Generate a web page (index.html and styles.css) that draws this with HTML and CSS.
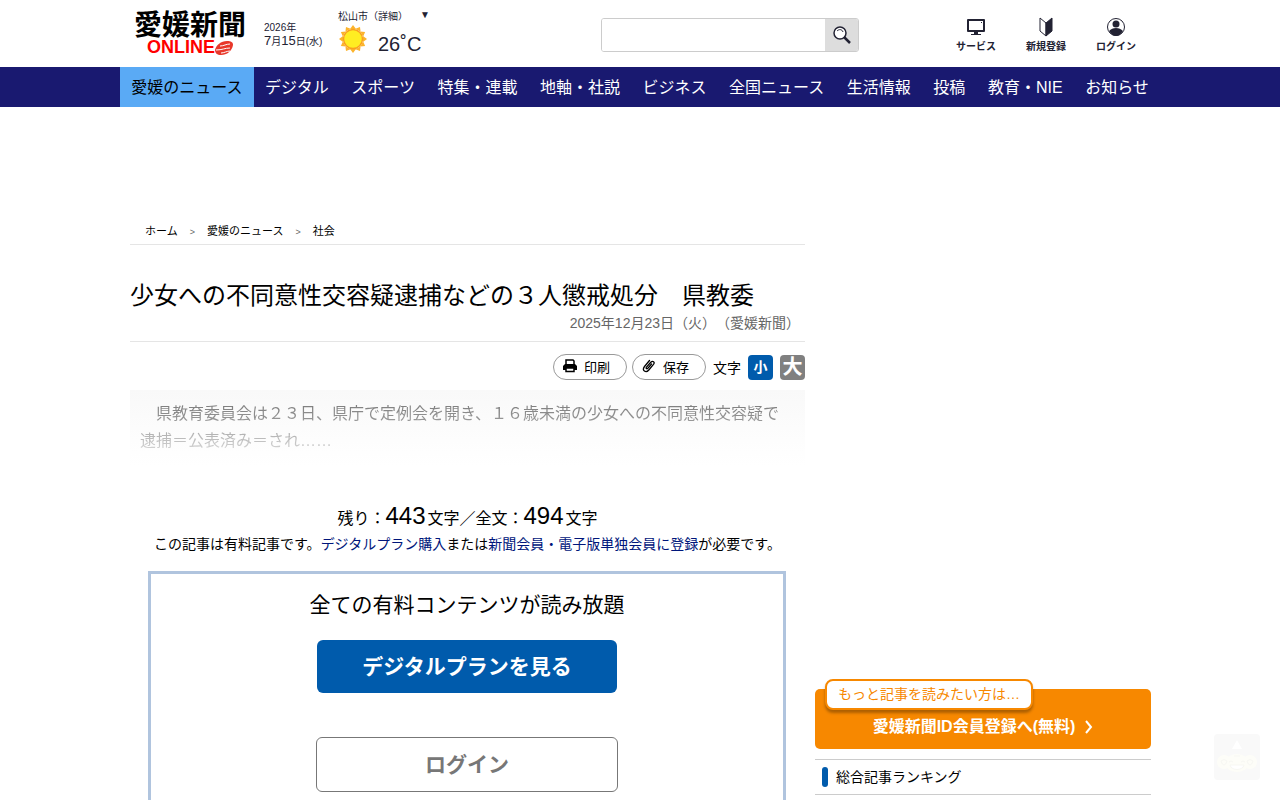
FILE: index.html
```html
<!DOCTYPE html>
<html lang="ja">
<head>
  <meta charset="UTF-8">
  <meta name="viewport" content="width=device-width, initial-scale=1.0">
  <title>少女への不同意性交容疑逮捕などの３人懲戒処分　県教委</title>

  <link rel="stylesheet" href="styles.css">
</head>
<body>
  <header class="header">
    <a class="logo" href="#">
      <span class="logo-name">愛媛新聞</span>
      <span class="logo-online">ONLINE
        <svg width="18" height="14" viewBox="0 0 18 14">
          <path d="M0 9C1 4 6 0 12 0c4 0 6 1 6 4-1 6-6 10-12 10-4 0-6-2-6-5z" fill="#e8382a"/>
          <path d="M5 5c4 0 6-2 10-2M1 9c6 0 9-2 14-2M6 12c3 0 6-2 9-2" fill="none" stroke="#fff" stroke-width="1"/>
        </svg>
      </span>
    </a>

    <p class="date">2026年<br><span>7</span>月<span>15</span>日(水)</p>

    <div class="weather">
      <a class="weather-city" href="#">松山市（詳細）<span>▼</span></a>
      <div class="weather-now">
        <svg width="30" height="30" viewBox="0 0 30 30">
          <g fill="#fcb42c">
            <path id="ray" d="M15 1l3 4h-6z"/>
            <use href="#ray" transform="rotate(30 15 15)"/>
            <use href="#ray" transform="rotate(60 15 15)"/>
            <use href="#ray" transform="rotate(90 15 15)"/>
            <use href="#ray" transform="rotate(120 15 15)"/>
            <use href="#ray" transform="rotate(150 15 15)"/>
            <use href="#ray" transform="rotate(180 15 15)"/>
            <use href="#ray" transform="rotate(210 15 15)"/>
            <use href="#ray" transform="rotate(240 15 15)"/>
            <use href="#ray" transform="rotate(270 15 15)"/>
            <use href="#ray" transform="rotate(300 15 15)"/>
            <use href="#ray" transform="rotate(330 15 15)"/>
          </g>
          <circle cx="15" cy="15" r="9.500" fill="#ffed22" stroke="#f9a01e" stroke-width="1.500"/>
        </svg>
        <span>26˚C</span>
      </div>
    </div>

    <form class="search">
      <input type="text" aria-label="検索">
      <button type="button" aria-label="検索する">
        <svg width="18" height="18" viewBox="0 0 18 18" fill="none" stroke="#223">
          <circle cx="7" cy="7" r="6" fill="#fff" stroke-width="1.500"/>
          <path d="M4 5c2-2 5-2 6 1" stroke-width="1"/>
          <path d="M11 11l6 6" stroke-width="2.500"/>
        </svg>
      </button>
    </form>

    <nav class="menu">
      <a href="#">
        <svg width="20" height="20" viewBox="0 0 20 20">
          <path d="M2 3h16v11H2z" fill="none" stroke="#223" stroke-width="2" stroke-linejoin="round"/>
          <path d="M8 15h4v2h3v1H5v-1h3zM15 5h1v1h-1z" fill="#223"/>
        </svg>
        サービス
      </a>
      <a href="#">
        <svg width="20" height="20" viewBox="0 0 20 20">
          <path d="M4 1l6 5v13l-6-5z" fill="#fff" stroke="#223"/>
          <path d="M16 1l-6 5v13l6-5z" fill="#223" stroke="#223"/>
        </svg>
        新規登録
      </a>
      <a href="#">
        <svg width="20" height="20" viewBox="0 0 20 20">
          <circle cx="10" cy="10" r="8.500" fill="#fff" stroke="#223"/>
          <circle cx="10" cy="7" r="3.500" fill="#223"/>
          <path d="M3 14c2-2 4-3 7-3s5 1 7 3c-2 3-4 5-7 5s-5-2-7-5z" fill="#223"/>
        </svg>
        ログイン
      </a>
    </nav>
  </header>

  <nav class="gnav">
    <ul>
      <li class="active"><a href="#">愛媛のニュース</a></li>
      <li><a href="#">デジタル</a></li>
      <li><a href="#">スポーツ</a></li>
      <li><a href="#">特集・連載</a></li>
      <li><a href="#">地軸・社説</a></li>
      <li><a href="#">ビジネス</a></li>
      <li><a href="#">全国ニュース</a></li>
      <li><a href="#">生活情報</a></li>
      <li><a href="#">投稿</a></li>
      <li><a href="#">教育・NIE</a></li>
      <li><a href="#">お知らせ</a></li>
    </ul>
  </nav>

  <div class="container">
    <main class="main">
      <ol class="breadcrumb">
        <li><a href="#">ホーム</a></li>
        <li><a href="#">愛媛のニュース</a></li>
        <li><a href="#">社会</a></li>
      </ol>

      <h1 class="title">少女への不同意性交容疑逮捕などの３人懲戒処分　県教委</h1>
      <p class="article-date">2025年12月23日（火）（愛媛新聞）</p>

      <div class="tools">
        <button class="tool" type="button">
          <svg width="14" height="14" viewBox="0 0 14 14">
            <path d="M3 6V1h7l1 1v4" fill="none" stroke="#000" stroke-width="1.500"/>
            <path d="M2 5h10l2 2v4H0V7z"/>
            <path d="M3 9h8v3.500H3z" fill="#fff" stroke="#000" stroke-width="1.500"/>
          </svg>
          印刷
        </button>
        <button class="tool" type="button">
          <svg width="14" height="14" viewBox="0 0 14 14" fill="none" stroke="#000" stroke-width="1.300" stroke-linecap="round">
            <path d="M9.500 5L5.800 9.300c-1 1-2.300 0-1.300-1.200L8.800 3.200c2-2 4.400 0 2.700 2.200L6.800 11c-3 3.500-7.300.5-4.300-3.500L7.500 1.500"/>
          </svg>
          保存
        </button>
        <span class="size-label">文字</span>
        <button class="size size-small" type="button">小</button>
        <button class="size size-large" type="button">大</button>
      </div>

      <div class="article">
        <p>　県教育委員会は２３日、県庁で定例会を開き、１６歳未満の少女への不同意性交容疑で逮捕＝公表済み＝され……</p>
      </div>

      <p class="remain">残り：<span>443</span>文字／全文：<span>494</span>文字</p>
      <p class="notice">この記事は有料記事です。<a href="#">デジタルプラン購入</a>または<a href="#">新聞会員・電子版単独会員に登録</a>が必要です。</p>

      <section class="plan">
        <h2>全ての有料コンテンツが読み放題</h2>
        <a class="btn-plan" href="#">デジタルプランを見る</a>
        <a class="btn-login" href="#">ログイン</a>
      </section>
    </main>

    <aside class="side">
      <a class="register" href="#">
        <span class="register-label">もっと記事を読みたい方は…</span>
        愛媛新聞ID会員登録へ(無料)
        <svg width="8" height="14" viewBox="0 0 8 14">
          <path d="M1 1l5 6-5 6" fill="none" stroke="#fff" stroke-width="2"/>
        </svg>
      </a>
      <h2 class="ranking">総合記事ランキング</h2>
    </aside>
  </div>

  <a class="pagetop" href="#" aria-label="ページの先頭へ">
    <svg width="46" height="46" viewBox="0 0 46 46">
      <path d="M23 6l5 9H18z" fill="#fff"/>
      <g fill="#fdfdf8">
        <circle cx="10" cy="28" r="7"/>
        <circle cx="36" cy="28" r="7"/>
        <ellipse cx="23" cy="29" rx="12" ry="9"/>
      </g>
      <path d="M16 31h14c-1 6-13 6-14 0z" fill="#fff" stroke="#f7f7f3"/>
      <path d="M15 28q2-2 4 0M27 28q2-2 4 0M20 22h6M7 27q3-3 6 0-1 4-3 4t-3-4M33 27q3-3 6 0-1 4-3 4t-3-4" fill="none" stroke="#f7f7f3"/>
    </svg>
  </a>
</body>
</html>
```
FILE: styles.css
```css
* {
  box-sizing: border-box;
}

body {
  margin: 0;
  font-family: "Liberation Sans", "Noto Sans CJK JP", sans-serif;
  font-size: 16px;
  text-spacing-trim: space-all;
  color: #000;
  background-color: #fff;
}

p, h1, h2, ul, ol {
  margin: 0;
  padding: 0;
  font-weight: normal;
}

ul, ol {
  list-style: none;
}

a {
  color: inherit;
  text-decoration: none;
}

button, input {
  font-family: inherit;
}

svg {
  flex: none;
}

/* header */
.header {
  display: flex;
  max-width: 1040px;
  height: 67px;
  margin: 0 auto;
  padding: 0 9px 0 12px;
  color: #223;
}

.logo {
  display: flex;
  flex-direction: column;
  align-items: center;
  width: 116px;
  padding-top: 12px;
  font-weight: bold;
}

.logo-name {
  font-size: 28px;
  line-height: 27px;
  color: #000;
  white-space: nowrap;
}

.logo-online {
  display: flex;
  align-items: center;
  font-size: 18px;
  line-height: 17px;
  color: #f00;
}

.date {
  width: 74px;
  padding: 21px 0 0 16px;
  font-size: 10px;
  line-height: 13px;
  white-space: nowrap;
}

.date span {
  font-size: 13px;
}

.weather {
  width: 108px;
  padding: 9px 0 0 16px;
}

.weather-city {
  display: flex;
  justify-content: space-between;
  font-size: 10px;
  line-height: 15px;
  white-space: nowrap;
}

.weather-city span {
  line-height: 11px;
}

.weather-now {
  display: flex;
  gap: 10px;
  font-size: 20px;
  line-height: 40px;
}

.search {
  display: flex;
  width: 258px;
  height: 34px;
  margin: 18px auto 0 171px;
  border: 1px solid #ccc;
  border-radius: 3px;
  overflow: hidden;
}

.search input {
  flex: 1;
  min-width: 0;
  padding: 0 8px;
  border: none;
}

.search button {
  display: flex;
  align-items: center;
  justify-content: center;
  width: 33px;
  padding: 0;
  border: none;
  background-color: #ddd;
}

.menu {
  display: flex;
  padding-top: 17px;
}

.menu a {
  display: flex;
  flex-direction: column;
  align-items: center;
  width: 70px;
  font-size: 10px;
  font-weight: bold;
  line-height: 20px;
}

/* global navigation */
.gnav {
  background-color: #191970;
}

.gnav ul {
  display: flex;
  max-width: 1040px;
  margin: 0 auto;
}

.gnav li {
  flex: 1 1 auto;
}

.gnav a {
  display: block;
  padding-top: 2px;
  line-height: 38px;
  text-align: center;
  white-space: nowrap;
  color: #fff;
}

.gnav .active a {
  background-color: #5aaaf5;
  color: #000;
}

/* contents */
.container {
  display: flex;
  gap: 10px;
  max-width: 1040px;
  margin: 0 auto;
  padding: 113px 9px 40px 10px;
}

.main {
  flex: 1;
  min-width: 0;
}

.breadcrumb {
  display: flex;
  padding: 1px 15px 2px;
  border-bottom: 1px solid #e5e5e5;
  font-size: 11px;
  line-height: 20px;
}

.breadcrumb li + li::before {
  content: ">";
  margin: 0 12px;
  font-size: 9px;
  color: #666;
}

.title {
  margin-top: 35px;
  font-size: 24px;
  line-height: 32px;
}

.article-date {
  padding: 0 5px 7px 0;
  border-bottom: 1px solid #e5e5e5;
  font-size: 14px;
  line-height: 22px;
  text-align: right;
  color: #666;
}

.tools {
  display: flex;
  align-items: center;
  justify-content: flex-end;
  gap: 5px;
  margin: 12px 0 10px;
}

.tool {
  display: flex;
  align-items: center;
  gap: 7px;
  width: 74px;
  height: 26px;
  padding: 0 9px 2px;
  border: 1px solid #999;
  border-radius: 13px;
  background-color: #fff;
  font-size: 13px;
  color: #000;
}

.size-label {
  margin: 0 2px;
  font-size: 14px;
}

.size {
  width: 25px;
  height: 25px;
  padding: 0;
  border: none;
  border-radius: 4px;
  font-weight: bold;
  line-height: 25px;
  color: #fff;
}

.size-small {
  background-color: #005bac;
  font-size: 14px;
}

.size-large {
  margin-left: 2px;
  background-color: #808080;
  font-size: 20px;
}

.article {
  padding: 10px 15px 12px 10px;
  background-image: linear-gradient(to bottom, #f9f9f9, #fff);
  line-height: 27px;
}

.article p {
  background-image: linear-gradient(to bottom, #777, #999 40%, #ddd);
  background-clip: text;
  color: transparent;
}

.remain {
  margin-top: 34px;
  line-height: 32px;
  text-align: center;
}

.remain span {
  margin-right: 2px;
  font-size: 24px;
}

.notice {
  font-size: 14px;
  line-height: 18px;
  text-align: center;
}

.notice a {
  color: #00167b;
}

.plan {
  display: flex;
  flex-direction: column;
  align-items: center;
  margin: 18px 19px 0 18px;
  padding: 16px 16px 40px;
  border: 3px solid #b0c4de;
  font-size: 21px;
}

.plan h2 {
  margin-bottom: 20px;
  font-size: 21px;
  line-height: 30px;
}

.btn-plan, .btn-login {
  width: 300px;
  border-radius: 6px;
  font-weight: bold;
  line-height: 53px;
  text-align: center;
}

.btn-plan {
  margin-bottom: 44px;
  background-color: #005bac;
  color: #fff;
}

.btn-login {
  width: 302px;
  border: 1px solid #777;
  color: #777;
}

/* sidebar */
.side {
  width: 336px;
  padding-top: 469px;
}

.register {
  display: flex;
  position: relative;
  align-items: center;
  justify-content: center;
  gap: 10px;
  padding: 26px 0 10px;
  border-radius: 5px;
  background-color: #f78800;
  font-weight: bold;
  line-height: 24px;
  color: #fff;
}

.register-label {
  position: absolute;
  top: -10px;
  left: 10px;
  width: 208px;
  border: 2px solid #f78800;
  border-radius: 8px;
  background-color: #fff;
  box-shadow: 0 3px 3px rgba(0, 0, 0, 0.3);
  font-size: 14px;
  font-weight: normal;
  line-height: 27px;
  text-align: center;
  color: #f78800;
}

.ranking {
  display: flex;
  align-items: center;
  gap: 8px;
  margin-top: 10px;
  padding: 7px;
  border-top: 1px solid #ccc;
  border-bottom: 1px solid #ccc;
  font-size: 14px;
  line-height: 20px;
}

.ranking::before {
  content: "";
  width: 6px;
  height: 20px;
  border-radius: 3px;
  background-color: #005bac;
}

.pagetop {
  position: fixed;
  right: 20px;
  bottom: 20px;
  width: 46px;
  height: 46px;
  border-radius: 4px;
  background-color: #f9f9f9;
}
```
